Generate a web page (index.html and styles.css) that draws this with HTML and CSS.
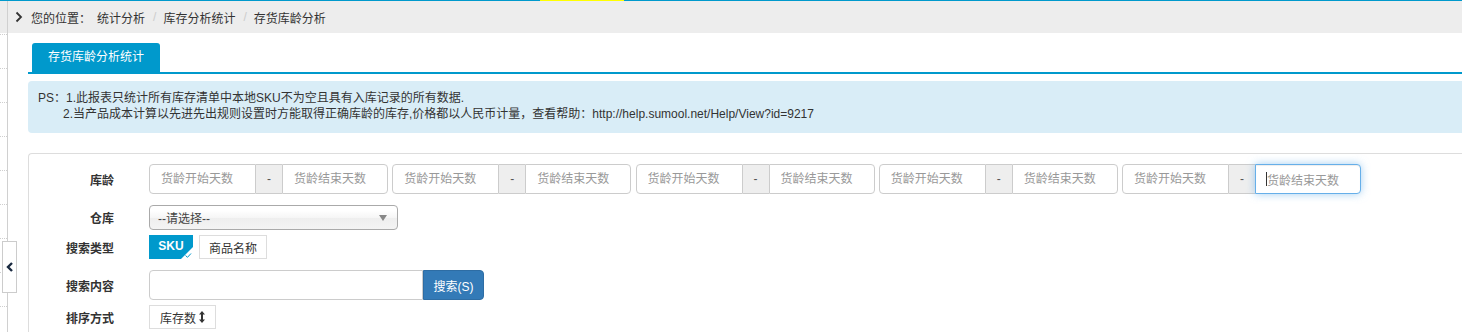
FILE: index.html
```html
<!DOCTYPE html>
<html lang="zh-CN">
<head>
<meta charset="utf-8">
<title>存货库龄分析统计</title>
<link rel="stylesheet" href="styles.css">
</head>
<body>
<div class="topline"><span class="loading"></span></div>
<div class="layout">
  <aside class="side">
    <div class="side-head"></div>
    <div class="side-list">
      <div class="side-item first"></div>
      <div class="side-item"></div>
      <div class="side-item"></div>
      <div class="side-item"></div>
      <div class="side-item"></div>
      <div class="side-item"></div>
      <div class="side-item"></div>
      <div class="side-item"></div>
      <div class="side-item"></div>
    </div>
  </aside>
  <main class="main">
    <div class="crumbs">
      <svg class="crumb-icon" width="8" height="12" viewBox="0 0 8 12"><path d="M1.5 1.5 L6 6 L1.5 10.5" fill="none" stroke="#333" stroke-width="1.8"/></svg>
      <span class="crumb lead">您的位置：</span>
      <span class="crumb">统计分析</span>
      <span class="sep">/</span>
      <span class="crumb">库存分析统计</span>
      <span class="sep">/</span>
      <span class="crumb">存货库龄分析</span>
    </div>
    <div class="content">
      <div class="tabs"><div class="tab">存货库龄分析统计</div></div>
      <div class="alert">
        <div class="alert-line">PS：1.此报表只统计所有库存清单中本地SKU不为空且具有入库记录的所有数据.</div>
        <div class="alert-line indent">2.当产品成本计算以先进先出规则设置时方能取得正确库龄的库存,价格都以人民币计量，查看帮助：http://help.sumool.net/Help/View?id=9217</div>
      </div>
      <div class="panel">
        <div class="row row-age">
          <label class="label">库龄</label>
          <div class="groups">
            <div class="group"><input class="in in-start" placeholder="货龄开始天数"><span class="addon">-</span><input class="in in-end" placeholder="货龄结束天数"></div>
            <div class="group"><input class="in in-start" placeholder="货龄开始天数"><span class="addon">-</span><input class="in in-end" placeholder="货龄结束天数"></div>
            <div class="group"><input class="in in-start" placeholder="货龄开始天数"><span class="addon">-</span><input class="in in-end" placeholder="货龄结束天数"></div>
            <div class="group"><input class="in in-start" placeholder="货龄开始天数"><span class="addon">-</span><input class="in in-end" placeholder="货龄结束天数"></div>
            <div class="group"><input class="in in-start" placeholder="货龄开始天数"><span class="addon">-</span><div class="in in-end focus"><span class="caret"></span><span class="ph">货龄结束天数</span></div></div>
          </div>
        </div>
        <div class="row row-wh">
          <label class="label">仓库</label>
          <div class="select"><span>--请选择--</span><span class="tri"></span></div>
        </div>
        <div class="row row-type">
          <label class="label">搜索类型</label>
          <div class="btns">
            <span class="opt active">SKU<svg class="check" width="12" height="12" viewBox="0 0 12 12"><path d="M12 0 L12 12 L0 12 Z" fill="#fff"/><path d="M4.5 8.5 L6.5 10.3 L10 6.5" fill="none" stroke="#0099cc" stroke-width="1"/></svg></span>
            <span class="opt">商品名称</span>
          </div>
        </div>
        <div class="row row-search">
          <label class="label">搜索内容</label>
          <div class="search"><input class="search-in"><span class="search-btn">搜索(S)</span></div>
        </div>
        <div class="row row-sort">
          <label class="label">排序方式</label>
          <span class="opt sort">库存数<svg class="updown" width="6" height="12" viewBox="0 0 6 12"><path d="M3 0 L6 3.5 L4 3.5 L4 8.5 L6 8.5 L3 12 L0 8.5 L2 8.5 L2 3.5 L0 3.5 Z" fill="#333"/></svg></span>
        </div>
      </div>
    </div>
  </main>
</div>
<div class="collapse"><svg width="8" height="10" viewBox="0 0 8 10"><path d="M6 1 L2 5 L6 9" fill="none" stroke="#1a2a40" stroke-width="2.4"/></svg></div>
</body>
</html>
```
FILE: styles.css
```css
* { box-sizing: border-box; }
html, body { margin: 0; padding: 0; }
body {
  font-family: "Liberation Sans", "Noto Sans CJK SC", sans-serif;
  font-size: 12px;
  color: #333;
  background: #fff;
  width: 1462px;
  height: 332px;
  overflow: hidden;
  position: relative;
}
.topline {
  height: 1px;
  background: #0099cc;
  position: relative;
}
.loading {
  position: absolute;
  left: 540px;
  top: 0;
  width: 84px;
  height: 1px;
  background: #ffff00;
}
.layout {
  display: flex;
  height: 331px;
}
.side {
  width: 8px;
  flex: none;
  border-right: 1px solid #d0d0d0;
}
.side-head {
  height: 32px;
  background: #ececec;
}
.side-item {
  height: 34px;
  border-bottom: 1px dotted #cfcfcf;
}
.side-item.first { height: 2px; }
.main {
  flex: 1;
  min-width: 0;
}
.crumbs {
  height: 32px;
  background: #ededed;
  display: flex;
  align-items: center;
  padding-left: 7px;
}
.crumb-icon { margin-right: 8px; }
.crumb.lead { margin-right: 6px; }
.sep {
  color: #ccc;
  margin: 0 7px 0 8px;
}
.content { padding-left: 20px; }
.tabs {
  padding-top: 10px;
  padding-left: 4px;
  border-bottom: 2px solid #0099cc;
  display: flex;
}
.tab {
  width: 128px;
  height: 29px;
  line-height: 29px;
  text-align: center;
  color: #fff;
  background: #0099cc;
  border-radius: 3px 3px 0 0;
}
.alert {
  margin-top: 7px;
  height: 52px;
  background: #d9edf7;
  border-radius: 4px 0 0 4px;
  padding: 9px 10px 0 10px;
  color: #333;
}
.alert-line { line-height: 16px; }
.alert-line.indent { padding-left: 25px; }
.panel {
  margin-top: 20px;
  border: 1px solid #ddd;
  border-right: none;
  border-radius: 4px 0 0 0;
  padding-top: 10px;
  padding-bottom: 10px;
}
.row {
  display: flex;
  align-items: center;
}
.label {
  width: 85px;
  margin-right: 35px;
  text-align: right;
  font-weight: bold;
  color: #333;
}
.row-age { height: 30px; }
.row-wh { height: 25px; margin-top: 11px; }
.row-type { height: 24px; margin-top: 5px; }
.row-search { height: 30px; margin-top: 11px; }
.row-sort { height: 24px; margin-top: 5px; }
.groups {
  display: flex;
  gap: 4.25px;
}
.group {
  display: flex;
  width: 239px;
  height: 30px;
}
.in {
  height: 30px;
  border: 1px solid #ccc;
  font: inherit;
  padding: 0 0 0 11px;
  outline: none;
  color: #555;
  background: #fff;
}
.in::placeholder { color: #999; }
.in-start {
  width: 107px;
  border-radius: 4px 0 0 4px;
}
.in-end {
  width: 106px;
  border-radius: 0 4px 4px 0;
}
.addon {
  width: 26px;
  height: 30px;
  background: #eee;
  border-top: 1px solid #ccc;
  border-bottom: 1px solid #ccc;
  display: flex;
  align-items: center;
  justify-content: center;
  color: #555;
}
.focus {
  border-color: #66afe9;
  box-shadow: inset 0 1px 1px rgba(0,0,0,.075), 0 0 8px rgba(102,175,233,.6);
  display: flex;
  align-items: center;
  padding-left: 10px;
}
.caret {
  width: 1px;
  height: 14px;
  background: #333;
}
.ph { color: #999; }
.select {
  width: 249px;
  height: 25px;
  border: 1px solid #aaa;
  border-radius: 4px;
  background: linear-gradient(#fff 20%, #f6f6f6 50%, #eee 52%, #f4f4f4);
  display: flex;
  align-items: center;
  justify-content: space-between;
  padding: 0 10px 0 8px;
  color: #444;
}
.tri {
  width: 0;
  height: 0;
  border-left: 4px solid transparent;
  border-right: 4px solid transparent;
  border-top: 6px solid #888;
}
.btns {
  display: flex;
  gap: 6px;
}
.opt {
  height: 24px;
  border: 1px solid #ddd;
  background: #fff;
  display: inline-flex;
  align-items: center;
  justify-content: center;
  color: #333;
  position: relative;
  padding: 0 9px;
}
.opt.active {
  background: #0099cc;
  border-color: #0099cc;
  color: #fff;
  width: 44px;
  padding-bottom: 3px;
  font-weight: bold;
}
.check {
  position: absolute;
  right: -1px;
  bottom: -1px;
}
.search {
  display: flex;
  height: 30px;
}
.search-in {
  width: 274px;
  height: 30px;
  border: 1px solid #ccc;
  border-radius: 4px 0 0 4px;
  outline: none;
}
.search-btn {
  width: 61px;
  height: 30px;
  background: #337ab7;
  border: 1px solid #2e6da4;
  border-radius: 0 4px 4px 0;
  color: #fff;
  display: flex;
  align-items: center;
  justify-content: center;
}
.sort { width: 67px; }
.updown { margin-left: 3px; }
.collapse {
  position: absolute;
  left: 2px;
  top: 241px;
  width: 15px;
  height: 52px;
  background: #fff;
  border: 1px solid #ccc;
  display: flex;
  align-items: center;
  justify-content: center;
}
```
